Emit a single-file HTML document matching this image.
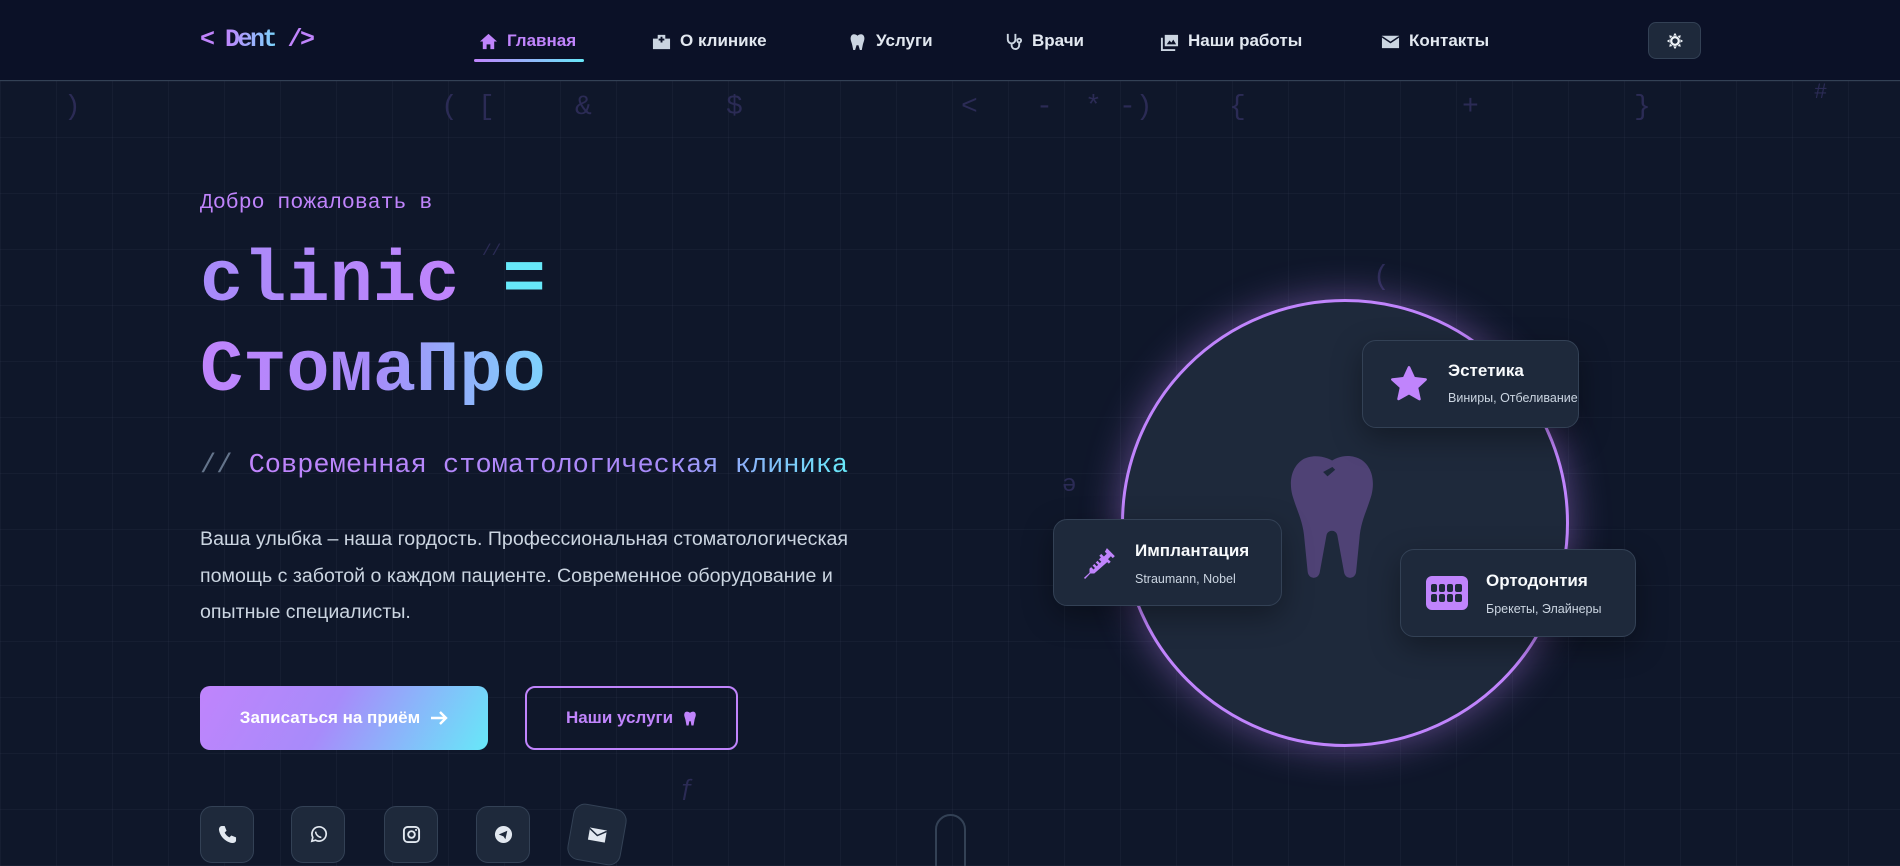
<!DOCTYPE html>
<html><head><meta charset="utf-8">
<style>
*{margin:0;padding:0;box-sizing:border-box}
html,body{width:1900px;height:866px;overflow:hidden}
body{background:#0f172a;font-family:"Liberation Sans","Noto Sans CJK SC",sans-serif;position:relative;
background-image:linear-gradient(rgba(148,163,184,0.05) 1px,transparent 1px),linear-gradient(90deg,rgba(148,163,184,0.05) 1px,transparent 1px);
background-size:56px 56px;background-position:0 25px}
.abs{position:absolute}
nav{position:absolute;left:0;top:0;width:1900px;height:81px;background:#0b1127;border-bottom:1px solid #334155}
.logo{left:200px;top:25px;font-family:"Liberation Mono",monospace;font-weight:bold;font-size:25px;color:#c084fc;letter-spacing:-2.5px}
.logo span{background:linear-gradient(90deg,#c084fc,#7dd3fc);-webkit-background-clip:text;color:transparent}
.ni{position:absolute;top:31px;font-size:17px;font-weight:bold;color:#e2e8f0;display:flex;align-items:center;gap:9px;white-space:nowrap}
.ni svg{width:19px;height:19px;fill:#cbd5e1}
.act{color:#c084fc}.act svg{fill:#c084fc}
.uline{left:474px;top:59px;width:110px;height:3px;background:linear-gradient(90deg,#c084fc,#67e8f9);border-radius:2px}
.theme{left:1648px;top:22px;width:53px;height:37px;background:#1e293b;border:1px solid #334155;border-radius:8px;display:flex;align-items:center;justify-content:center}
.sym{position:absolute;font-family:"Liberation Mono",monospace;font-size:28px;color:#2b2b55}
.mono{font-family:"Liberation Mono",monospace}
.h1{font-family:"Liberation Mono",monospace;font-weight:bold;font-size:72px;line-height:90px}
.grad1{background:linear-gradient(90deg,#a78bfa,#c084fc);-webkit-background-clip:text;color:transparent}
.grad2{background:linear-gradient(90deg,#c084fc,#a78bfa 50%,#7dd3fc);-webkit-background-clip:text;color:transparent}
.grad3{background:linear-gradient(90deg,#c084fc,#a78bfa 70%,#67e8f9);-webkit-background-clip:text;color:transparent}
.btn{position:absolute;top:686px;height:64px;border-radius:10px;display:flex;align-items:center;justify-content:center;gap:10px;font-weight:bold;font-size:17px}
.soc{position:absolute;top:806px;width:54px;height:57px;background:#1e293b;border:1px solid #334155;border-radius:12px;display:flex;align-items:center;justify-content:center}
.soc svg{width:19px;height:19px}
.card{position:absolute;background:#1e293b;border:1px solid #334155;border-radius:14px;box-shadow:0 10px 30px rgba(0,0,0,0.35)}
.card .t{position:absolute;font-weight:bold;font-size:17px;color:#f8fafc;white-space:nowrap}
.card .s{position:absolute;font-size:12.5px;color:#cbd5e1;white-space:nowrap}
.card svg{position:absolute;fill:#c084fc}
</style></head><body>

<nav>
<div class="abs logo">&lt; <span>Dent</span> /&gt;</div>
<div class="ni act" style="left:479px"><svg viewBox="0 0 20 20"><path d="M10 2 L19 10 H16 V18 H12 V13 H8 V18 H4 V10 H1 Z"/></svg>Главная</div>
<div class="ni" style="left:652px"><svg viewBox="0 0 20 20"><path d="M6 3h8v15H6z M1 7h5v11H1z M14 7h5v11h-5z" /><path d="M9 5h2v2h2v2h-2v2H9V9H7V7h2z" fill="#0b1127"/></svg>О клинике</div>
<div class="ni" style="left:848px"><svg viewBox="0 0 20 20"><path d="M10 4C8 2 4 1.5 3 5c-1 3 1 6 1.5 9l1 5h2l1.5-5h2l1.5 5h2l1-5c.5-3 2.5-6 1.5-9-1-3.5-5-3-7-1z"/></svg>Услуги</div>
<div class="ni" style="left:1004px"><svg viewBox="0 0 20 20" style="fill:none;stroke:#cbd5e1;stroke-width:2"><path d="M4 2v6a4 4 0 008 0V2M8 12v2a4 4 0 008 0v-3"/><circle cx="16" cy="9" r="2"/></svg>Врачи</div>
<div class="ni" style="left:1160px"><svg viewBox="0 0 20 20"><path d="M5 3h14v12H5z M1 6h2v12h13v2H1z"/><path d="M7 13l3-4 2 2 2-3 3 5z" fill="#0b1127"/></svg>Наши работы</div>
<div class="ni" style="left:1381px"><svg viewBox="0 0 20 20"><path d="M1 4h18v13H1z"/><path d="M1 5l9 6 9-6" stroke="#0b1127" stroke-width="1.6" style="fill:none"/></svg>Контакты</div>
<div class="abs uline"></div>
<div class="abs theme"><svg width="18" height="18" viewBox="0 0 20 20"><g fill="#f1f5f9"><circle cx="10" cy="10" r="5.5"/><path d="M10 1l2 3h-4zM10 19l2-3h-4zM1 10l3 2v-4zM19 10l-3 2v-4zM3.6 3.6l3.5.8-2.7 2.7zM16.4 16.4l-3.5-.8 2.7-2.7zM16.4 3.6l-.8 3.5-2.7-2.7zM3.6 16.4l.8-3.5 2.7 2.7z"/></g><circle cx="10" cy="10" r="3" fill="#1e293b"/></svg></div>
</nav>

<div class="sym" style="left:64px;top:92px">)</div>
<div class="sym" style="left:441px;top:92px">(</div>
<div class="sym" style="left:478px;top:92px">[</div>
<div class="sym" style="left:575px;top:92px">&amp;</div>
<div class="sym" style="left:726px;top:92px">$</div>
<div class="sym" style="left:961px;top:92px">&lt;</div>
<div class="sym" style="left:1036px;top:92px">-</div>
<div class="sym" style="left:1085px;top:92px">*</div>
<div class="sym" style="left:1119px;top:92px">-)</div>
<div class="sym" style="left:1229px;top:92px">{</div>
<div class="sym" style="left:1462px;top:92px">+</div>
<div class="sym" style="left:1634px;top:92px">}</div>
<div class="sym" style="left:1814px;top:80px;font-size:22px">#</div>
<div class="sym" style="left:482px;top:242px;font-size:16px">//</div>
<div class="sym" style="left:1373px;top:262px">(</div>
<div class="sym" style="left:1062px;top:472px;font-size:24px">ə</div>
<div class="sym" style="left:680px;top:776px;font-size:24px">ƒ</div>

<div class="abs mono" style="left:200px;top:191px;font-size:21.5px;color:#c084fc">Добро пожаловать в</div>
<div class="abs h1" style="left:200px;top:236px;white-space:pre"><span class="grad1">clinic</span> <span style="color:#67e8f9">=</span></div>
<div class="abs h1 grad2" style="left:200px;top:326px">СтомаПро</div>
<div class="abs mono" style="left:200px;top:451px;font-size:27px;white-space:pre"><span style="color:#64748b">// </span><span class="grad3">Современная стоматологическая клиника</span></div>
<div class="abs" style="left:200px;top:521px;width:680px;font-size:19.6px;line-height:36.5px;color:#cbd5e1">Ваша улыбка – наша гордость. Профессиональная стоматологическая помощь с заботой о каждом пациенте. Современное оборудование и опытные специалисты.</div>

<div class="btn" style="left:200px;width:288px;color:#fff;background:linear-gradient(120deg,#c084fc,#a78bfa 45%,#67e8f9)">Записаться на приём <svg width="18" height="16" viewBox="0 0 18 16" fill="none" stroke="#fff" stroke-width="2.4"><path d="M1 8h15M10 2l6 6-6 6"/></svg></div>
<div class="btn" style="left:525px;width:213px;color:#c084fc;border:2px solid #c084fc">Наши услуги <svg width="14" height="17" viewBox="0 0 20 22"><path fill="#c084fc" d="M10 3C8 1 3 0 2 4c-1 3 1 6 1.5 9l1.5 8h3l1-6h2l1 6h3l1.5-8c.5-3 2.5-6 1.5-9-1-4-6-3-8-1z"/></svg></div>

<div class="soc" style="left:200px"><svg viewBox="0 0 20 20"><path fill="#e2e8f0" d="M4 1l3 0 2 5-2 2c1 2 3 4 5 5l2-2 5 2v3c0 2-2 3-4 3C8 18 2 12 1 5c0-2 1-4 3-4z"/></svg></div>
<div class="soc" style="left:291px"><svg viewBox="0 0 20 20"><g fill="none" stroke="#e2e8f0" stroke-width="1.8"><path d="M3 17l1-4a7.5 7.5 0 113 3z"/><path d="M7 7c0 3 3 6 6 6" stroke-width="1.6"/></g></svg></div>
<div class="soc" style="left:384px"><svg viewBox="0 0 20 20"><g fill="none" stroke="#e2e8f0" stroke-width="2"><rect x="2" y="2" width="16" height="16" rx="4"/><circle cx="10" cy="10" r="3.5"/></g><circle cx="14.8" cy="5.2" r="1.1" fill="#e2e8f0"/></svg></div>
<div class="soc" style="left:476px"><svg viewBox="0 0 20 20"><circle cx="10" cy="10" r="9" fill="#e2e8f0"/><path d="M5 10l9-4-2 9-2-3z" fill="#1e293b"/></svg></div>
<div class="soc" style="left:570px;transform:rotate(10deg)"><svg viewBox="0 0 20 20"><path fill="#e2e8f0" d="M1 4h18v13H1z"/><path d="M1 5l9 6 9-6" stroke="#1e293b" stroke-width="1.6" fill="none"/></svg></div>
<div class="abs" style="left:935px;top:814px;width:31px;height:70px;border:2px solid #334155;border-radius:16px"></div>

<div class="abs" style="left:1121px;top:299px;width:448px;height:448px;border-radius:50%;background:#1e293b;border:3px solid #c084fc;box-shadow:0 0 40px rgba(192,132,252,0.45)"></div>
<svg class="abs" style="left:1289px;top:453px" width="110" height="127" viewBox="0 0 100 115"><path fill="#4f4275" d="M44 10C36 3 22 0 12 6 2 13 0 26 3 38c4 14 10 24 11 40l3 30c1 7 10 7 11 0l6-33c1-6 9-6 10 0l6 33c1 7 10 7 11 0l3-30c1-16 7-26 11-40 3-12 1-25-9-32-10-6-22-4-30 3l6 6-7 6-4-4z"/></svg>

<div class="card" style="left:1362px;top:340px;width:217px;height:88px">
<svg style="left:26px;top:23px" width="40" height="40" viewBox="0 0 24 24"><path d="M12 2l3 6.5 7 .8-5.2 4.8 1.5 7L12 17.5 5.7 21l1.5-7L2 9.3l7-.8z" stroke="#c084fc" stroke-width="1.5" stroke-linejoin="round"/></svg>
<div class="t" style="left:85px;top:20px">Эстетика</div>
<div class="s" style="left:85px;top:50px">Виниры, Отбеливание</div>
</div>
<div class="card" style="left:1053px;top:519px;width:229px;height:87px">
<svg style="left:26px;top:25px" width="38" height="38" viewBox="0 0 24 24"><path d="M17 2l5 5-1.3 1.3-1.2-1.2-1.8 1.8 1.7 1.7-1.2 1.2-1-1L9 18H6.5L3.2 21.5 2.5 20.8 6 17.5V15l7.2-7.2-1-1 1.2-1.2 1.7 1.7 1.8-1.8-1.2-1.2z"/><path d="M7.5 13.5l1.5 1.5M9.5 11.5l1.5 1.5M11.5 9.5l1.5 1.5" stroke="#1e293b" stroke-width="1.3"/></svg>
<div class="t" style="left:81px;top:21px">Имплантация</div>
<div class="s" style="left:81px;top:52px">Straumann, Nobel</div>
</div>
<div class="card" style="left:1400px;top:549px;width:236px;height:88px">
<svg style="left:25px;top:26px" width="42" height="34" viewBox="0 0 42 34"><rect x="0" y="0" width="42" height="34" rx="6" fill="#c084fc"/><g fill="#1e293b"><rect x="5" y="8" width="6" height="8" rx="2"/><rect x="13" y="8" width="6" height="8" rx="2"/><rect x="21" y="8" width="6" height="8" rx="2"/><rect x="29" y="8" width="7" height="8" rx="2"/><rect x="5" y="18" width="6" height="8" rx="2"/><rect x="13" y="18" width="6" height="8" rx="2"/><rect x="21" y="18" width="6" height="8" rx="2"/><rect x="29" y="18" width="7" height="8" rx="2"/></g></svg>
<div class="t" style="left:85px;top:21px">Ортодонтия</div>
<div class="s" style="left:85px;top:52px">Брекеты, Элайнеры</div>
</div>
</body></html>
